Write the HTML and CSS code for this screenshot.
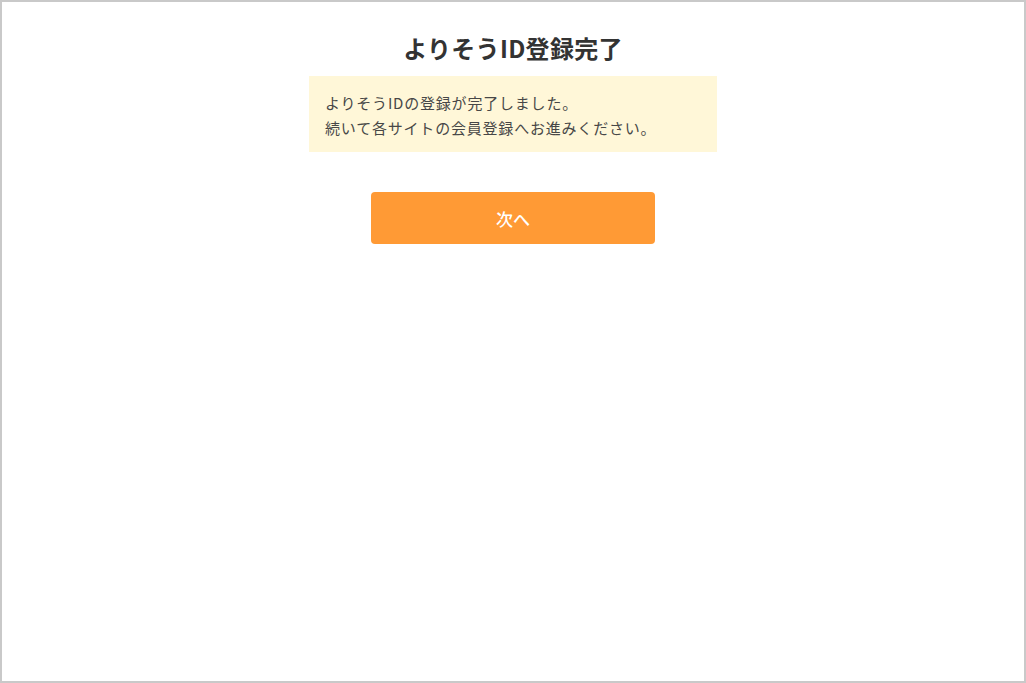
FILE: index.html
```html
<!DOCTYPE html>
<html lang="ja">
<head>
<meta charset="utf-8">
<title>よりそうID登録完了</title>
<link rel="stylesheet" href="styles.css">
</head>
<body>
<div class="frame">
  <main class="content">
    <h1 class="title">よりそうID登録完了</h1>
    <div class="notice">
      <p>よりそうIDの登録が完了しました。</p>
      <p>続いて各サイトの会員登録へお進みください。</p>
    </div>
    <button class="next" type="button">次へ</button>
  </main>
</div>
</body>
</html>
```
FILE: styles.css
```css
* { box-sizing: border-box; }
html, body {
  margin: 0;
  padding: 0;
  height: 100%;
  background: #fff;
}
body {
  font-family: "Noto Sans CJK JP", "Noto Sans", sans-serif;
  color: #333;
}
.frame {
  width: 1026px;
  height: 683px;
  border: 2px solid #c9c9c9;
  background: #fff;
}
.content {
  display: flex;
  flex-direction: column;
  align-items: center;
  padding-top: 28px;
}
.title {
  margin: 0;
  font-size: 24px;
  font-weight: 700;
  line-height: 36px;
  letter-spacing: 0.3px;
  color: #333;
}
.notice {
  margin-top: 10px;
  width: 408px;
  background: #fff7d8;
  padding: 14px 16px 12px;
  font-size: 15px;
  line-height: 25px;
  letter-spacing: 0.8px;
  color: #474747;
}
.notice p { margin: 0; }
.next {
  margin-top: 40px;
  width: 284px;
  height: 52px;
  border: none;
  border-radius: 4px;
  background: #ff9a35;
  color: #fff;
  font-family: inherit;
  font-size: 17px;
  font-weight: 500;
  cursor: pointer;
}
```
